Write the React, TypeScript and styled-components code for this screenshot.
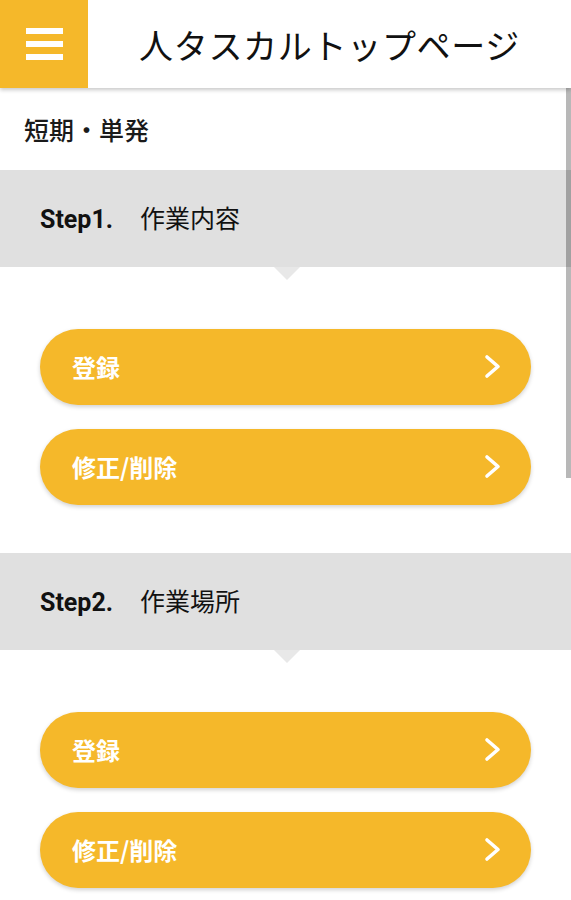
import React from "react";
import styled, { createGlobalStyle } from "styled-components";

const GlobalStyle = createGlobalStyle`
  html, body {
    margin: 0;
    padding: 0;
    background: #ffffff;
    overflow: hidden;
  }
  body {
    font-family: Roboto, "Noto Sans CJK JP", "Noto Sans", sans-serif;
    color: #1c1c1c;
  }
  * { box-sizing: border-box; }
`;

const YELLOW = "#F5B82A";

const Page = styled.div`
  position: relative;
  width: 571px;
  height: 900px;
  overflow: hidden;
  background: #fff;
`;

const Header = styled.header`
  position: relative;
  z-index: 2;
  display: flex;
  align-items: stretch;
  height: 88px;
  background: #fff;
  box-shadow: 0 2px 4px rgba(0, 0, 0, 0.22);
`;

const MenuButton = styled.button`
  width: 88px;
  height: 88px;
  border: none;
  padding: 0;
  background: ${YELLOW};
  display: flex;
  flex-direction: column;
  align-items: center;
  justify-content: center;
  gap: 7px;
`;

const MenuBar = styled.span`
  display: block;
  width: 37px;
  height: 6px;
  background: #fff;
`;

const Title = styled.h1`
  flex: 1;
  margin: 0;
  display: flex;
  align-items: center;
  justify-content: center;
  font-family: "Noto Sans CJK JP", sans-serif;
  font-weight: 400;
  font-size: 34px;
  letter-spacing: 0.7px;
  color: #111;
  padding-left: 0;
`;

const Category = styled.div`
  height: 82px;
  display: flex;
  align-items: center;
  padding: 0 0 0 24px;
  font-family: "Noto Sans CJK JP", sans-serif;
  font-weight: 500;
  font-size: 25px;
  color: #1a1a1a;
`;

const StepBand = styled.div`
  position: relative;
  height: 97px;
  background: #e0e0e0;
  display: flex;
  align-items: center;
  padding-left: 40px;
  color: #111;

  &::after {
    content: "";
    position: absolute;
    left: 274px;
    bottom: -13px;
    width: 0;
    height: 0;
    border-left: 13px solid transparent;
    border-right: 13px solid transparent;
    border-top: 13px solid #e8e8e8;
  }
`;

const StepTitle = styled.h2`
  margin: 0;
  font-size: 25px;
  line-height: 1.2;
  font-weight: 400;
`;

const StepNo = styled.span`
  font-family: Roboto, sans-serif;
  font-weight: 700;
  font-size: 25px;
  margin-right: 27px;
`;

const StepName = styled.span`
  font-family: "Noto Sans CJK JP", sans-serif;
  font-weight: 400;
  font-size: 25px;
`;

const ButtonList = styled.div`
  display: flex;
  flex-direction: column;
  gap: 24px;
  padding: 62px 40px 48px 40px;
`;

const ActionButton = styled.button`
  height: 76px;
  width: 100%;
  border: none;
  border-radius: 38px;
  background: ${YELLOW};
  box-shadow: 0 2px 4px rgba(0, 0, 0, 0.18);
  display: flex;
  align-items: center;
  justify-content: space-between;
  padding: 0 30px 2px 32px;
  color: #fff;
  font-family: "Noto Sans CJK JP", sans-serif;
  font-weight: 700;
  font-size: 24px;
`;

const Chevron = () => (
  <svg width="17" height="25" viewBox="0 0 17 25" fill="none">
    <polyline
      points="3,3 14,12.5 3,22"
      stroke="#fff"
      strokeWidth="3.6"
      strokeLinecap="round"
      strokeLinejoin="round"
    />
  </svg>
);

const ScrollThumb = styled.div`
  position: absolute;
  right: 0;
  top: 88px;
  width: 5px;
  height: 390px;
  background: rgba(0, 0, 0, 0.28);
  z-index: 3;
`;

const steps = [
  { no: "Step1.", name: "作業内容" },
  { no: "Step2.", name: "作業場所" },
];

const actions = ["登録", "修正/削除"];

export default function App() {
  return (
    <Page>
      <GlobalStyle />
      <Header>
        <MenuButton aria-label="menu">
          <MenuBar />
          <MenuBar />
          <MenuBar />
        </MenuButton>
        <Title>人タスカルトップページ</Title>
      </Header>
      <Category>短期・単発</Category>
      {steps.map((s) => (
        <section key={s.no}>
          <StepBand>
            <StepTitle>
              <StepNo>{s.no}</StepNo>
              <StepName>{s.name}</StepName>
            </StepTitle>
          </StepBand>
          <ButtonList>
            {actions.map((a) => (
              <ActionButton key={a}>
                <span>{a}</span>
                <Chevron />
              </ActionButton>
            ))}
          </ButtonList>
        </section>
      ))}
      <ScrollThumb />
    </Page>
  );
}
